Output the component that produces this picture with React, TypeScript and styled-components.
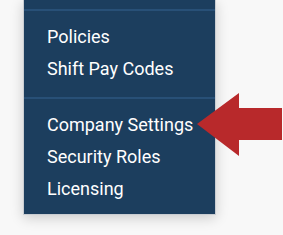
import React from "react";
import styled, { createGlobalStyle } from "styled-components";

const GlobalStyle = createGlobalStyle`
  html, body {
    margin: 0;
    padding: 0;
    background: #f8f8f8;
  }
  body {
    font-family: Roboto, "Liberation Sans", sans-serif;
  }
`;

const Page = styled("div")`
  position: relative;
  width: 283px;
  height: 235px;
  overflow: hidden;
`;

const Menu = styled("div")`
  margin-left: 23px;
  width: 191px;
  background-color: #1c3e5e;
  border: 1px solid #c9cdd2;
  border-top: none;
  box-shadow: 0 3px 12px rgba(0, 0, 0, 0.18);
`;

const Section = styled("div")<{ $top?: number; $bottom?: number }>`
  padding: ${(p) => p.$top ?? 10}px 0 ${(p) => p.$bottom ?? 12}px;
  & + & {
    border-top: 2px solid #285077;
  }
`;

const Item = styled("a")`
  display: block;
  padding-left: 23px;
  height: 32px;
  line-height: 32px;
  font-size: 18px;
  font-weight: 400;
  color: #ffffff;
  text-decoration: none;
  white-space: nowrap;
`;

const Arrow = styled("svg")`
  position: absolute;
  left: 0;
  top: 0;
`;

export default () => (
  <>
    <GlobalStyle />
    <Page>
      <Menu>
        <Section $top={9} $bottom={0} />
        <Section>
          <Item>Policies</Item>
          <Item>Shift Pay Codes</Item>
        </Section>
        <Section $bottom={9}>
          <Item>Company Settings</Item>
          <Item>Security Roles</Item>
          <Item>Licensing</Item>
        </Section>
      </Menu>
      <Arrow width="283" height="235" viewBox="0 0 283 235">
        <polygon
          points="197,124 239,93 239,108 282,108 282,140 239,140 239,156"
          fill="#b8292b"
        />
      </Arrow>
    </Page>
  </>
);
